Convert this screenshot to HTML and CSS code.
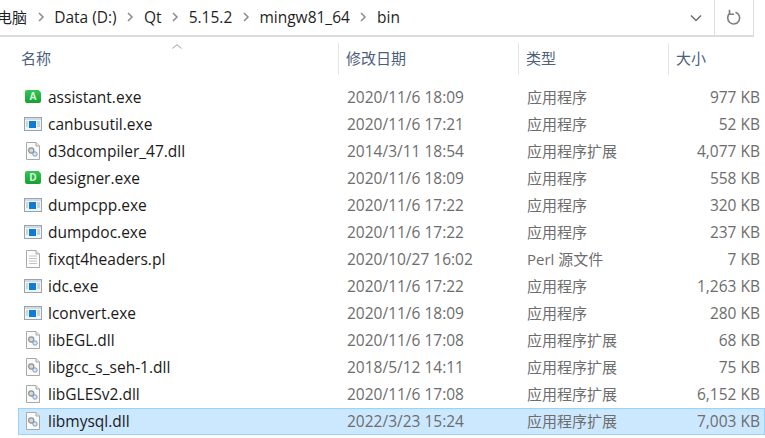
FILE: index.html
```html
<!DOCTYPE html>
<html lang="zh">
<head>
    <meta charset="UTF-8" />
    <title>bin</title>
    <link rel="stylesheet" href="styles.css">
</head>
<body>
<svg class="defs" width="0" height="0">
    <symbol id="ico-exe" viewBox="0 0 18 16">
        <rect x="0.500" y="1.500" width="17" height="13" fill="#f1f5f8" stroke="#98a4af"/>
        <rect x="1" y="2" width="16" height="2" fill="#d3dbe2"/>
        <rect x="5" y="5" width="7" height="7" fill="#0f7bd8"/>
        <path d="M13 6h3M13 8h3M13 10h3M2 6h2M2 8h2M2 10h2" stroke="#a9b3bc"/>
    </symbol>
    <symbol id="ico-dll" viewBox="0 0 16 18">
        <path d="M1.500 0.500H11L14.500 4V17.500H1.500Z" fill="#f9fafa" stroke="#a9a9a9"/>
        <path d="M11 0.500V4H14.500" fill="#e6e6e6" stroke="#a9a9a9"/>
        <circle cx="6.200" cy="8.500" r="2.600" fill="#d5d8da" stroke="#8d9296" stroke-width="1.200"/>
        <circle cx="10" cy="12" r="2.200" fill="#dbe7f2" stroke="#7f9cb8"/>
    </symbol>
    <symbol id="ico-txt" viewBox="0 0 16 18">
        <path d="M1.500 0.500H11L14.500 4V17.500H1.500Z" fill="#fdfdfd" stroke="#a9a9a9"/>
        <path d="M11 0.500V4H14.500" fill="#e6e6e6" stroke="#a9a9a9"/>
        <path d="M4 6h8M4 8.500h8M4 11h8M4 13.500h8" stroke="#c4c4c4"/>
    </symbol>
    <symbol id="ico-chev" viewBox="0 0 8 10">
        <path d="M2 1l4 4-4 4" fill="none" stroke="#8a8a8a" stroke-width="1.500"/>
    </symbol>
</svg>

<div class="toolbar">
    <div class="crumbs">
        <span class="first">电脑</span><svg class="chev"><use href="#ico-chev"/></svg>
        <span>Data (D:)</span><svg class="chev"><use href="#ico-chev"/></svg>
        <span>Qt</span><svg class="chev"><use href="#ico-chev"/></svg>
        <span>5.15.2</span><svg class="chev"><use href="#ico-chev"/></svg>
        <span>mingw81_64</span><svg class="chev"><use href="#ico-chev"/></svg>
        <span>bin</span>
    </div>
    <div class="drop">
        <svg width="12" height="8" viewBox="0 0 12 8"><path d="M1 1.500l5 5 5-5" fill="none" stroke="#6e6e6e" stroke-width="1.500"/></svg>
    </div>
    <div class="refresh">
        <svg width="16" height="17" viewBox="0 0 16 17"><path d="M9.500 3.200A6 6 0 1 1 4 4.200" fill="none" stroke="#7d7d7d" stroke-width="1.600"/><path d="M3.500 0.800V5.300H8" fill="none" stroke="#7d7d7d" stroke-width="1.600"/></svg>
    </div>
</div>

<div class="head">
    <svg class="sort" width="10" height="5" viewBox="0 0 10 5"><path d="M0.500 4.500L5 0.700l4.500 3.800" fill="none" stroke="#9a9a9a"/></svg>
    <div class="col">名称</div>
    <div class="col">修改日期</div>
    <div class="col">类型</div>
    <div class="col">大小</div>
</div>

<div class="rows">
    <div class="row"><span class="name"><span class="badge">A</span>assistant.exe</span><span>2020/11/6 18:09</span><span class="type">应用程序</span><span class="size">977 KB</span></div>
    <div class="row"><span class="name"><svg class="ico"><use href="#ico-exe"/></svg>canbusutil.exe</span><span>2020/11/6 17:21</span><span class="type">应用程序</span><span class="size">52 KB</span></div>
    <div class="row"><span class="name"><svg class="ico"><use href="#ico-dll"/></svg>d3dcompiler_47.dll</span><span>2014/3/11 18:54</span><span class="type">应用程序扩展</span><span class="size">4,077 KB</span></div>
    <div class="row"><span class="name"><span class="badge">D</span>designer.exe</span><span>2020/11/6 18:09</span><span class="type">应用程序</span><span class="size">558 KB</span></div>
    <div class="row"><span class="name"><svg class="ico"><use href="#ico-exe"/></svg>dumpcpp.exe</span><span>2020/11/6 17:22</span><span class="type">应用程序</span><span class="size">320 KB</span></div>
    <div class="row"><span class="name"><svg class="ico"><use href="#ico-exe"/></svg>dumpdoc.exe</span><span>2020/11/6 17:22</span><span class="type">应用程序</span><span class="size">237 KB</span></div>
    <div class="row"><span class="name"><svg class="ico"><use href="#ico-txt"/></svg>fixqt4headers.pl</span><span>2020/10/27 16:02</span><span class="type">Perl 源文件</span><span class="size">7 KB</span></div>
    <div class="row"><span class="name"><svg class="ico"><use href="#ico-exe"/></svg>idc.exe</span><span>2020/11/6 17:22</span><span class="type">应用程序</span><span class="size">1,263 KB</span></div>
    <div class="row"><span class="name"><svg class="ico"><use href="#ico-exe"/></svg>lconvert.exe</span><span>2020/11/6 18:09</span><span class="type">应用程序</span><span class="size">280 KB</span></div>
    <div class="row"><span class="name"><svg class="ico"><use href="#ico-dll"/></svg>libEGL.dll</span><span>2020/11/6 17:08</span><span class="type">应用程序扩展</span><span class="size">68 KB</span></div>
    <div class="row"><span class="name"><svg class="ico"><use href="#ico-dll"/></svg>libgcc_s_seh-1.dll</span><span>2018/5/12 14:11</span><span class="type">应用程序扩展</span><span class="size">75 KB</span></div>
    <div class="row"><span class="name"><svg class="ico"><use href="#ico-dll"/></svg>libGLESv2.dll</span><span>2020/11/6 17:08</span><span class="type">应用程序扩展</span><span class="size">6,152 KB</span></div>
    <div class="row selected"><span class="name"><svg class="ico"><use href="#ico-dll"/></svg>libmysql.dll</span><span>2022/3/23 15:24</span><span class="type">应用程序扩展</span><span class="size">7,003 KB</span></div>
</div>
</body>
</html>
```

FILE: styles.css
```css
body {
    margin: 0;
    width: 765px;
    height: 438px;
    overflow: hidden;
    background-color: white;
    font-family: "Open Sans", "Noto Sans CJK SC", sans-serif;
    font-size: 15.5px;
    color: #6d6d6d;
}

.defs {
    position: absolute;
}

/* address bar */
.toolbar {
    display: flex;
    width: 753px;
    height: 35px;
    border-bottom: 2px solid #dcdcdc;
    border-right: 1px solid #dcdcdc;
}

.crumbs {
    flex: 1;
    display: flex;
    align-items: center;
    gap: 9.6px;
    margin-left: -3px;
    padding-bottom: 2px;
    box-sizing: border-box;
    color: #1f1f1f;
    white-space: nowrap;
}

.first {
    font-size: 15px;
}

.chev {
    width: 8px;
    height: 10px;
}

.drop {
    width: 38px;
    display: flex;
    align-items: center;
    justify-content: center;
    padding-left: 2px;
    box-sizing: border-box;
}

.refresh {
    width: 39px;
    display: flex;
    align-items: center;
    justify-content: center;
    border-left: 1px solid #dcdcdc;
    box-sizing: border-box;
}

/* column header */
.head {
    position: relative;
    display: grid;
    grid-template-columns: 339px 180px 150px 1fr;
    margin-top: 6px;
    height: 32px;
    color: #4c607a;
    font-size: 15px;
}

.col {
    padding-left: 7px;
    border-right: 1px solid #e5e5e5;
    line-height: 30px;
}

.col:first-of-type {
    padding-left: 21px;
}

.col:last-child {
    border-right: none;
}

.sort {
    position: absolute;
    left: 172px;
    top: 1px;
}

/* file list */
.rows {
    margin-top: 9px;
    margin-left: 18px;
    width: 747px;
}

.row {
    display: grid;
    grid-template-columns: 321px 180px 150px 1fr;
    align-items: center;
    height: 27px;
    box-sizing: border-box;
    padding-bottom: 2px;
    border-top: 1px solid transparent;
    border-bottom: 1px solid transparent;
}

.row span:nth-child(2),
.row span:nth-child(3) {
    padding-left: 8px;
}

.name {
    display: flex;
    align-items: center;
    color: #1a1a1a;
    white-space: nowrap;
}

.type {
    font-size: 15px;
    line-height: 20px;
}

.ico {
    width: 18px;
    height: 18px;
    margin-left: 6px;
    margin-right: 6px;
}

.badge {
    width: 16px;
    height: 13px;
    margin: 0 7px;
    background: linear-gradient(#35c653, #14a034);
    border-radius: 2px;
    clip-path: polygon(0 0, 85% 0, 100% 20%, 100% 100%, 0 100%);
    color: #d9f5de;
    font-size: 10px;
    font-weight: bold;
    line-height: 13px;
    text-align: center;
}

.size {
    text-align: right;
    padding-right: 5px;
}

.row.selected {
    grid-template-columns: 320px 180px 150px 1fr;
    background-color: #cce8ff;
    border: 1px solid #99d1ff;
}

.row.selected .name {
    margin-left: -1px;
}

.row.selected .size {
    padding-right: 4px;
}
```
